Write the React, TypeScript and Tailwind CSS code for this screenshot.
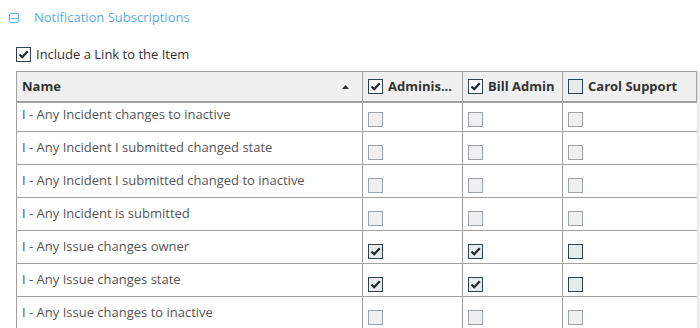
import React from 'react';

type Box = 'on' | 'off' | 'disabled';

const users = [
  { name: 'Adminis...', checked: true, w: 'w-[100px]' },
  { name: 'Bill Admin', checked: true, w: 'w-[100px]' },
  { name: 'Carol Support', checked: false, w: 'w-[134px]' },
];

const rows: { label: string; boxes: Box[] }[] = [
  { label: 'I - Any Incident changes to inactive', boxes: ['disabled', 'disabled', 'disabled'] },
  { label: 'I - Any Incident I submitted changed state', boxes: ['disabled', 'disabled', 'disabled'] },
  { label: 'I - Any Incident I submitted changed to inactive', boxes: ['disabled', 'disabled', 'disabled'] },
  { label: 'I - Any Incident is submitted', boxes: ['disabled', 'disabled', 'disabled'] },
  { label: 'I - Any Issue changes owner', boxes: ['on', 'on', 'off'] },
  { label: 'I - Any Issue changes state', boxes: ['on', 'on', 'off'] },
  { label: 'I - Any Issue changes to inactive', boxes: ['disabled', 'disabled', 'disabled'] },
];

function Tick() {
  return (
    <svg width="13" height="13" viewBox="0 0 13 13" className="block">
      <path d="M2.5 6.5 L5.2 9.2 L10.8 3.2" fill="none" stroke="#1c2730" strokeWidth="2.2" />
    </svg>
  );
}

function CheckBox({ state, light }: { state: Box; light?: boolean }) {
  if (state === 'disabled') {
    return <span className="block w-[15px] h-[15px] border border-[#9aa4aa] bg-[#f0f0f0]" />;
  }
  return (
    <span
      className={`flex items-center justify-center w-[15px] h-[15px] border border-[#2e4250] ${
        light ? 'bg-white' : 'bg-[#e8eaea]'
      }`}
    >
      {state === 'on' && <Tick />}
    </span>
  );
}

export default function App() {
  return (
    <div className="w-[700px] h-[328px] overflow-hidden bg-white font-['Open_Sans',sans-serif] text-[13px] text-[#333]">
      <div className="flex items-center h-[36px] pl-[9px]">
        <span className="flex items-center justify-center w-[10px] h-[10px] border border-[#5ab4ea] rounded-[2px]">
          <span className="block w-[6px] h-[1px] bg-[#5ab4ea]" />
        </span>
        <span className="ml-[15px] text-[#55aee6]">Notification Subscriptions</span>
      </div>

      {/* include link option */}
      <div className="flex items-center h-[35px] pl-[16px] pt-[2px]">
        <CheckBox state="on" light />
        <span className="ml-[5px]">Include a Link to the Item</span>
      </div>

      <div className="flex pl-[16px]">
        <div className="w-[681px]">
          <div className="flex h-[32px] bg-[#f0f0f0] border-t border-b-2 border-l border-[#a0a0a0] font-bold">
            <div className="flex items-center justify-between w-[345px] pl-[5px] pr-[13px]">
              <span>Name</span>
              <svg width="7" height="4" viewBox="0 0 7 4" className="block">
                <path d="M0 4 L3.5 0 L7 4 Z" fill="#2a3640" />
              </svg>
            </div>
            {users.map((u) => (
              <div key={u.name} className={`flex items-center ${u.w} border-l border-[#a0a0a0] pl-[5px]`}>
                <CheckBox state={u.checked ? 'on' : 'off'} light={u.checked} />
                <span className="ml-[5px] whitespace-nowrap">{u.name}</span>
              </div>
            ))}
            <div className="border-l border-[#a0a0a0]" />
          </div>

          {/* body is scrolled a few px */}
          <div className="overflow-hidden border-l border-[#a0a0a0] h-[230px]">
            <div className="-mt-[4px]">
              {rows.map((r) => (
                <div key={r.label} className="flex h-[33px] border-b border-[#a0a0a0] text-[#555]">
                  <div className="w-[345px] pl-[5px] pt-[6px] leading-[18px] whitespace-nowrap">{r.label}</div>
                  {r.boxes.map((b, i) => (
                    <div key={i} className={`${users[i].w} border-l border-[#a0a0a0] pl-[5px] pt-[13px]`}>
                      <CheckBox state={b} />
                    </div>
                  ))}
                </div>
              ))}
            </div>
          </div>
        </div>
        <div className="w-[3px] bg-[#f0f0f0] border-l border-[#e4e4e4]" />
      </div>
    </div>
  );
}
